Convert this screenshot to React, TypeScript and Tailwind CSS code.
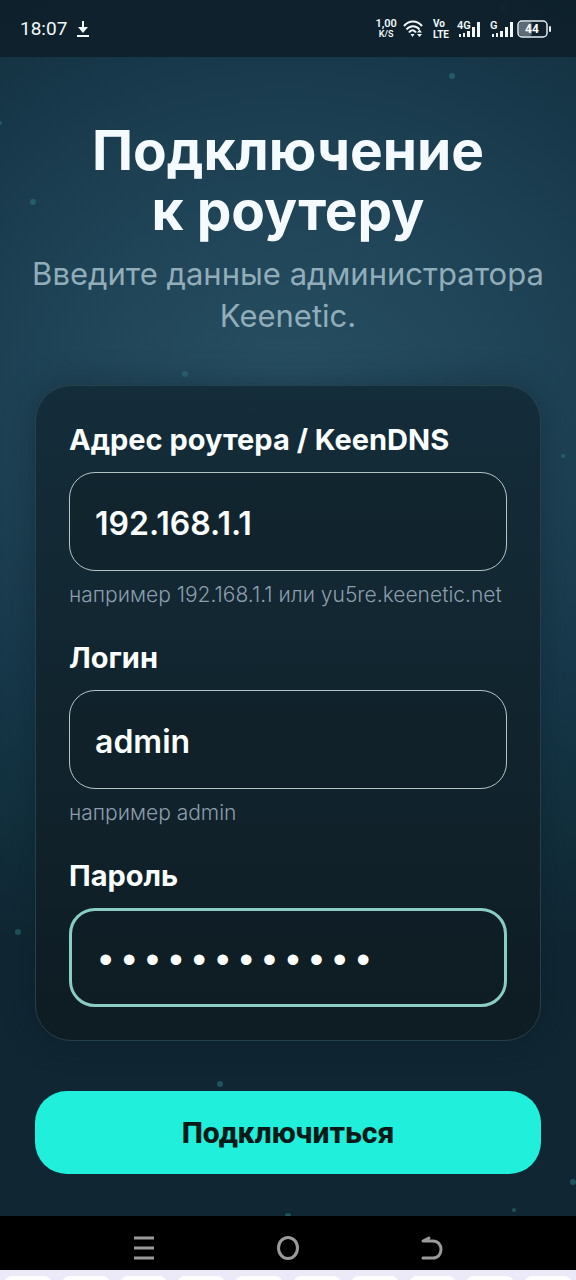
import { useState } from 'react'

interface FieldProps {
  id: string
  label: string
  type?: string
  value: string
  hint?: string
  onChange: (value: string) => void
}

// Faint particles floating over the backdrop
const PARTICLES = [
  { x: 503, y: 8, r: 3 },
  { x: 304, y: 29, r: 2 },
  { x: 452, y: 76, r: 3 },
  { x: 0, y: 123, r: 2 },
  { x: 33, y: 202, r: 3 },
  { x: 185, y: 374, r: 3 },
  { x: 563, y: 456, r: 2 },
  { x: 18, y: 932, r: 3 },
  { x: 220, y: 1084, r: 3 },
  { x: 573, y: 1182, r: 3 },
  { x: 514, y: 1210, r: 2 },
  { x: 288, y: 1216, r: 3 },
]

function Backdrop() {
  return (
    <svg className="absolute inset-0 h-full w-full" aria-hidden="true">
      {PARTICLES.map((p) => (
        <circle key={`${p.x}-${p.y}`} cx={p.x} cy={p.y} r={p.r} fill="#2f8084" opacity="0.5" />
      ))}
    </svg>
  )
}

function Signal({ label }: { label: string }) {
  return (
    <svg width="23" height="20" viewBox="0 0 23 20" fill="currentColor">
      <text x="0" y="10" fontSize="11" fontWeight="600">{label}</text>
      <rect x="2" y="15" width="2" height="3" />
      <rect x="6" y="14" width="2" height="4" />
      <rect x="10" y="12" width="3" height="6" />
      <rect x="15" y="8" width="3" height="10" />
      <rect x="20" y="3" width="3" height="15" />
    </svg>
  )
}

function StatusBar() {
  return (
    <header className="relative flex h-[57px] items-center justify-between bg-[#0d1f2a]/90 pr-6 pl-5 font-[Roboto,sans-serif] text-[#f1f9fb]">
      <div className="flex items-center gap-2">
        <span className="text-[19px] leading-6">18:07</span>
        <svg width="16" height="18" viewBox="0 0 16 18" fill="currentColor">
          <path d="M7 1h2v6h4l-5 6-5-6h4zM2 15h12v2H2z" />
        </svg>
      </div>
      <div className="flex items-center">
        <div className="mr-1.5 text-center font-semibold">
          <div className="text-[11px] leading-[11px]">1,00</div>
          <div className="text-[9px] leading-[11px]">K/S</div>
        </div>
        <svg className="mr-2.5" width="20" height="18" viewBox="0 0 20 18" fill="none" stroke="currentColor" strokeWidth="2">
          <path d="M1 6C6 0 14 0 19 6" />
          <path d="M3.5 9.5C7 5 13 5 16.5 9.5" />
          <path d="M6 12.5c2-3 5-3 7 0" />
          <path d="M7.5 14h4L9.5 17z" fill="currentColor" stroke="none" />
          <path d="M14 12.5l2.5-3 2.5 3zM14 14h5l-2.5 3z" fill="currentColor" stroke="none" />
        </svg>
        <div className="mr-2 text-[10px] leading-[11px] font-bold">
          <div>Vo</div>
          <div>LTE</div>
        </div>
        <div className="mr-1 flex gap-2.5">
          <Signal label="4G" />
          <Signal label="G" />
        </div>
        <svg width="35" height="18" viewBox="0 0 35 18" role="img" aria-label="44%">
          <rect x="2" y="2" width="13" height="14" rx="3" fill="#5d6b75" />
          <rect x="1" y="1" width="29" height="16" rx="4" fill="none" stroke="#e6eef2" strokeWidth="1.5" />
          <path d="M33 7v4" stroke="#e6eef2" strokeWidth="2" strokeLinecap="round" />
          <text x="15" y="13" textAnchor="middle" fontSize="12" fontWeight="700" fill="#fff">44</text>
        </svg>
      </div>
    </header>
  )
}

function Field({ id, label, type = 'text', value, hint, onChange }: FieldProps) {
  return (
    <div>
      <label htmlFor={id} className="block text-[29px] leading-9 font-bold text-[#fbffff]">
        {label}
      </label>
      <input
        id={id}
        type={type}
        value={value}
        onChange={(e) => onChange(e.target.value)}
        className={
          type === 'password'
            ? 'mt-3.5 block h-[99px] w-full rounded-[26px] border-3 border-[#8acdc3] bg-[#101d25]/40 px-[22px] pt-2.5 font-["Liberation_Mono",monospace] text-[39px] text-white outline-none'
            : 'mt-3.5 block h-[99px] w-full rounded-[26px] border border-[#b5c5c6] bg-[#101d25]/40 px-[25px] pt-1 text-[32px] font-semibold text-[#fbffff] outline-none'
        }
      />
      {hint && <p className="mt-2 text-[21px] leading-8 font-light whitespace-nowrap text-[#8c9ead]">{hint}</p>}
    </div>
  )
}

function SystemNav() {
  return (
    <nav className="relative flex h-[54px] justify-center gap-[120px] bg-black pt-2.5 text-[#9b9b9b]">
      <button type="button" aria-label="Недавние">
        <svg width="24" height="24" viewBox="0 0 24 24" stroke="currentColor" strokeWidth="3">
          <path d="M2 2h20M2 12h20M2 22h20" />
        </svg>
      </button>
      <button type="button" aria-label="Домой">
        <svg width="24" height="26" viewBox="0 0 24 26" fill="none" stroke="currentColor" strokeWidth="3">
          <ellipse cx="12" cy="13" rx="9.5" ry="10.5" />
        </svg>
      </button>
      <button type="button" aria-label="Назад">
        <svg width="24" height="26" viewBox="0 0 24 26" fill="none" stroke="currentColor" strokeWidth="3" strokeLinecap="round" strokeLinejoin="round">
          <path d="M9 3L3 6h10c5 0 8 4 8 8.5s-3 8.5-8 8.5H3" />
        </svg>
      </button>
    </nav>
  )
}

function KeyboardEdge() {
  return (
    <div className="relative flex h-2.5 gap-2.5 overflow-hidden bg-[#ece9f8] px-1 pt-1.5" aria-hidden="true">
      {Array.from({ length: 10 }, (_, i) => (
        <div key={i} className="h-10 flex-1 rounded-lg bg-white" />
      ))}
    </div>
  )
}

export default function App() {
  const [address, setAddress] = useState('192.168.1.1')
  const [login, setLogin] = useState('admin')
  const [password, setPassword] = useState('keenetic1234')

  return (
    <div className="relative flex min-h-screen flex-col overflow-hidden bg-[#102632] bg-[radial-gradient(ellipse_560px_480px_at_50%_400px,#284f63_0%,#1f4356_45%,#17384a_75%,#12303d_100%,transparent_125%)] font-[Inter,sans-serif]">
      <Backdrop />
      <StatusBar />
      <main className="relative flex-1 px-[35px] pt-[63px] pb-[42px]">
        <h1 className="text-center text-[55px] leading-[60px] font-bold text-[#f5faff]">
          Подключение
          <br />к роутеру
        </h1>
        <p className="-mx-4 mt-[13px] text-center text-[31px] leading-[42px] text-[#91adba]">
          Введите данные администратора
          <br />
          Keenetic.
        </p>

        <form onSubmit={(e) => e.preventDefault()}>
          <div className="mt-12 flex flex-col gap-[29px] rounded-[36px] border border-[#24404b] bg-linear-to-b from-[#142d3a] to-[#0e1c23] px-[33px] pt-9 pb-[33px] shadow-[0_0_32px_rgba(8,24,34,0.4)]">
            <Field
              id="address"
              label="Адрес роутера / KeenDNS"
              value={address}
              hint="например 192.168.1.1 или yu5re.keenetic.net"
              onChange={setAddress}
            />
            <Field id="login" label="Логин" value={login} hint="например admin" onChange={setLogin} />
            <Field id="password" label="Пароль" type="password" value={password} onChange={setPassword} />
          </div>
          <button
            type="submit"
            className="mt-[50px] h-[83px] w-full rounded-[32px] bg-[#20efdb] font-[Roboto,sans-serif] text-[30px] font-extrabold text-[#061a17]"
          >
            Подключиться
          </button>
        </form>
      </main>
      <SystemNav />
      <KeyboardEdge />
    </div>
  )
}
